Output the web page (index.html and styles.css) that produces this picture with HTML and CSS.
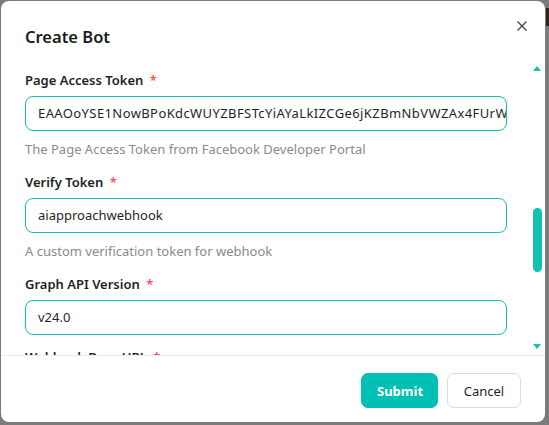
FILE: index.html
```html
<!DOCTYPE html>
<html>
<head>
<meta charset="utf-8">
<link rel="stylesheet" href="styles.css">
</head>
<body>
<div class="modal">
  <div class="modal-header">
    <h2 class="modal-title">Create Bot</h2>
    <button class="close-btn" aria-label="Close">
      <svg width="10" height="10" viewBox="0 0 10 10"><path d="M0.5 0.5L9.5 9.5M9.5 0.5L0.5 9.5" stroke="#444" stroke-width="1.3" fill="none"/></svg>
    </button>
  </div>
  <div class="modal-body">
    <div class="field">
      <label class="label">Page Access Token <span class="req">*</span></label>
      <div class="input input-token">EAAOoYSE1NowBPoKdcWUYZBFSTcYiAYaLkIZCGe6jKZBmNbVWZAx4FUrWZAb</div>
      <div class="help">The Page Access Token from Facebook Developer Portal</div>
    </div>
    <div class="field">
      <label class="label">Verify Token <span class="req">*</span></label>
      <div class="input">aiapproachwebhook</div>
      <div class="help">A custom verification token for webhook</div>
    </div>
    <div class="field">
      <label class="label">Graph API Version <span class="req">*</span></label>
      <div class="input">v24.0</div>
    </div>
    <div class="field">
      <label class="label">Webhook Base URL <span class="req">*</span></label>
      <div class="input"></div>
    </div>
    <div class="scrollbar">
      <span class="arrow up"></span>
      <span class="thumb"></span>
      <span class="arrow down"></span>
    </div>
  </div>
  <div class="modal-footer">
    <button class="btn btn-primary">Submit</button>
    <button class="btn btn-default">Cancel</button>
  </div>
</div>
<div class="edge"></div>
</body>
</html>
```
FILE: styles.css
```css
* { box-sizing: border-box; }
html, body { margin: 0; padding: 0; }
body {
  background: #7b7b7b;
  width: 549px;
  height: 425px;
  overflow: hidden;
  font-family: "Noto Sans", "Liberation Sans", sans-serif;
  color: #1f1f1f;
  position: relative;
}
.modal {
  margin: 1px 0 0 1px;
  width: 544px;
  height: 421px;
  background: #fff;
  border-radius: 8px;
  display: flex;
  flex-direction: column;
  overflow: hidden;
}
.modal-header {
  height: 59px;
  padding: 0 18px 0 24px;
  display: flex;
  align-items: flex-start;
  justify-content: space-between;
}
.modal-title {
  margin: 24px 0 0;
  font-size: 16.5px;
  font-weight: 600;
  line-height: 24px;
  color: #1a1a1a;
}
.close-btn {
  margin-top: 20px;
  width: 10px;
  height: 10px;
  padding: 0;
  border: 0;
  background: none;
  display: flex;
}
.modal-body {
  position: relative;
  height: 296px;
  overflow: hidden;
  padding: 10px 38px 0 24px;
  border-bottom: 1px solid #ececec;
}
.field { margin-bottom: 12px; }
.label {
  display: block;
  font-size: 13px;
  font-weight: 600;
  line-height: 20px;
  margin-bottom: 6px;
  color: #1f1f1f;
}
.req { color: #ff4d4f; margin-left: 3px; }
.input {
  height: 35px;
  border: 1px solid #12c2b4;
  border-radius: 8px;
  padding: 0 12px;
  font-size: 13px;
  line-height: 33px;
  white-space: nowrap;
  overflow: hidden;
  color: #1f1f1f;
}
.input-token { letter-spacing: 0.4px; }
.help {
  margin-top: 8px;
  font-size: 13px;
  line-height: 21px;
  color: #8a8a8a;
}
.scrollbar {
  position: absolute;
  right: 3px;
  top: 0;
  width: 9px;
  height: 296px;
}
.thumb {
  position: absolute;
  left: 0;
  top: 148px;
  width: 9px;
  height: 64px;
  background: #12c2b4;
  border-radius: 5px;
}
.arrow {
  position: absolute;
  left: 0;
  width: 0;
  height: 0;
  border-left: 4.5px solid transparent;
  border-right: 4.5px solid transparent;
}
.arrow.up { top: 6px; border-bottom: 5px solid #12c2b4; }
.arrow.down { top: 284px; border-top: 5px solid #12c2b4; }
.modal-footer {
  flex: 1;
  display: flex;
  justify-content: flex-end;
  align-items: flex-start;
  gap: 9px;
  padding: 17px 24px 0 0;
}
.btn {
  height: 35px;
  border-radius: 7px;
  font-family: inherit;
  font-size: 13px;
  padding: 0 15px;
  cursor: pointer;
}
.btn-primary {
  background: #00bfb3;
  border: 1px solid #00bfb3;
  color: #fff;
  font-weight: 700;
  width: 77px;
}
.btn-default {
  background: #fff;
  border: 1px solid #dcdcdc;
  color: #1f1f1f;
  width: 74px;
}
.edge {
  position: absolute;
  right: 0;
  top: 8px;
  width: 3px;
  height: 18px;
  background: #2b2419;
}
```
